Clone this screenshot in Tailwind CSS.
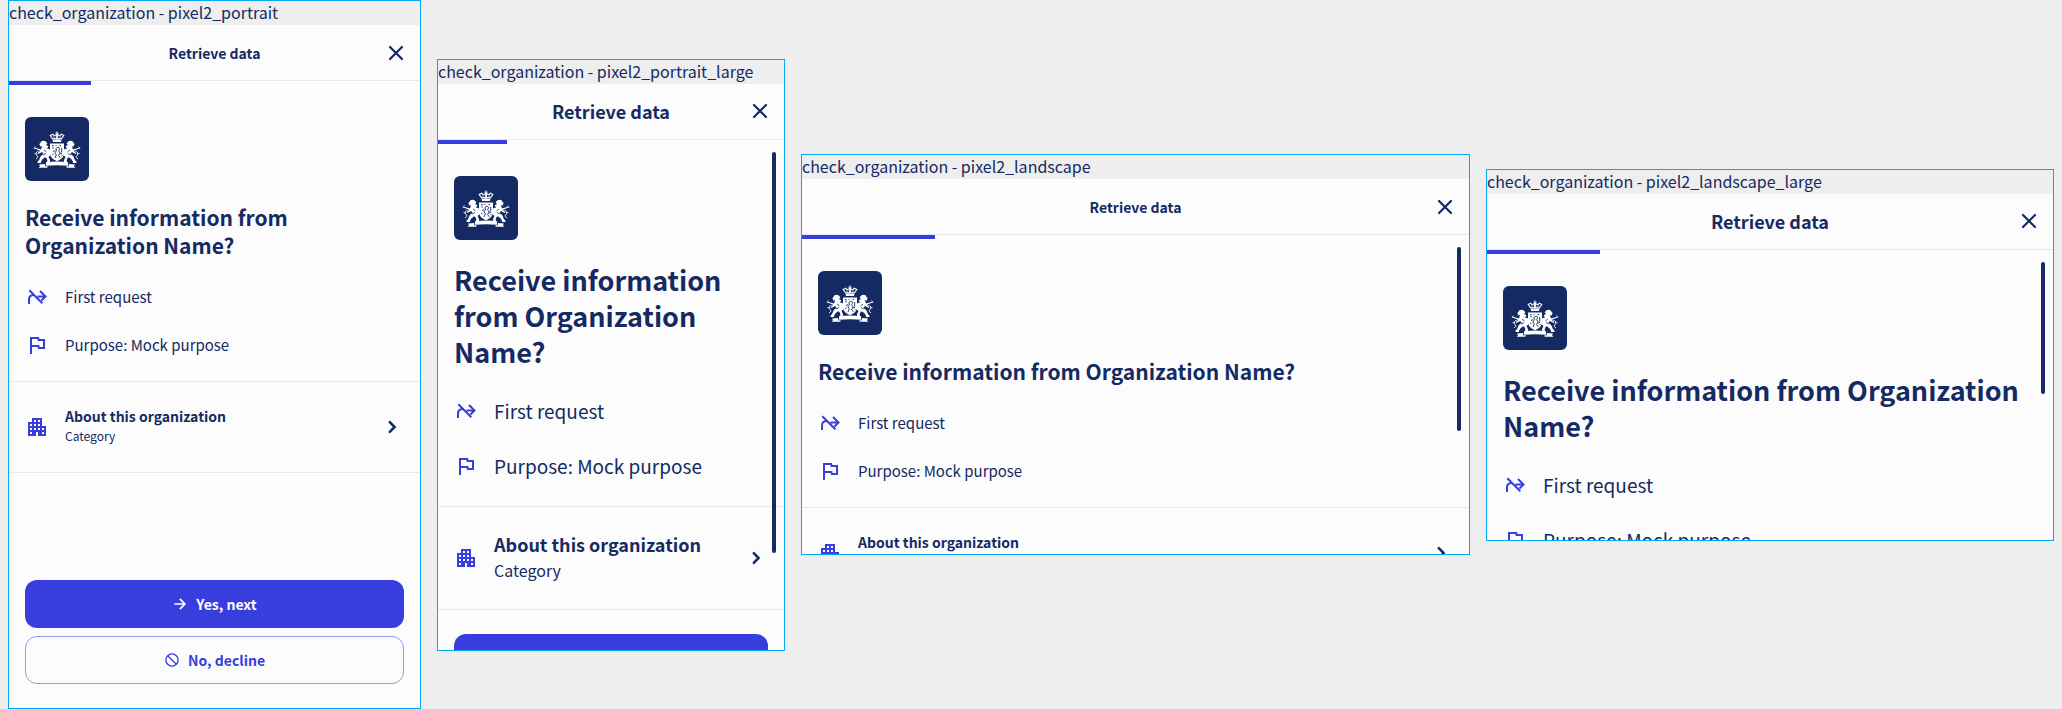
<!DOCTYPE html>
<html lang="en">
<head>
<meta charset="utf-8">
<title>check_organization</title>
<script src="https://cdn.jsdelivr.net/npm/@tailwindcss/browser@4"></script>
</head>
<body class="min-h-screen bg-[#eeeeee] font-['Noto_Sans_CJK_SC','Noto_Sans',sans-serif] text-[#152a62]">

<svg class="hidden" aria-hidden="true">
  <symbol id="close" viewBox="0 0 24 24"><path d="M6 6l12 12M18 6L6 18" fill="none" stroke="currentColor" stroke-width="2.2" stroke-linecap="round"/></symbol>
  <symbol id="first" viewBox="0 0 24 24"><path d="M4.300 5.300l13 13M4 19v-4.500c0-2.600 1.800-4.300 4.500-4.500M12.500 11.500H20M15 6l5.500 5.500-4 4" fill="none" stroke="currentColor" stroke-width="2"/></symbol>
  <symbol id="flag" viewBox="0 0 24 24"><path fill="currentColor" d="M12.360 6l.4 2H18v6h-3.360l-.4-2H7V6h5.360M14 4H5v17h2v-7h5.600l.4 2h7V6h-5.600L14 4z"/></symbol>
  <symbol id="building" viewBox="0 0 24 24"><path fill="currentColor" d="M17 11V3H7v4H3v14h8v-4h2v4h8V11h-4zM7 19H5v-2h2v2zm0-4H5v-2h2v2zm0-4H5V9h2v2zm4 4H9v-2h2v2zm0-4H9V9h2v2zm0-4H9V5h2v2zm4 8h-2v-2h2v2zm0-4h-2V9h2v2zm0-4h-2V5h2v2zm4 12h-2v-2h2v2zm0-4h-2v-2h2v2z"/></symbol>
  <symbol id="chevron" viewBox="0 0 24 24"><path d="M9.800 7.200l4.800 4.800-4.800 4.800" fill="none" stroke="currentColor" stroke-width="2.500" stroke-linecap="round"/></symbol>
  <symbol id="arrow" viewBox="0 0 24 24"><path d="M4.500 12h14M12.500 5.200l6.800 6.800-6.800 6.800" fill="none" stroke="currentColor" stroke-width="2.600" stroke-linecap="round"/></symbol>
  <symbol id="block" viewBox="0 0 24 24"><path d="M5.500 5.500l13 13" stroke="currentColor" stroke-width="2"/><circle cx="12" cy="12" r="9.200" fill="none" stroke="currentColor" stroke-width="2"/></symbol>
  <symbol id="arms" viewBox="0 0 64 64">
    <g fill="#fff">
      <!-- crown -->
      <path d="M31.500 14.500h1v1.200h1.200v.9h-1.200v1.400h-1v-1.400h-1.200v-.9h1.200zM27.500 22.800h9l-.6 2.200h-7.800z"/>
      <path d="M27.600 21.900l-2.400-3.400 2.600-1.300 1.400 1.700 2.800-1.700 2.800 1.700 1.400-1.700 2.600 1.300-2.400 3.400z" fill="none" stroke="#fff" stroke-width="1.100"/>
      <path d="M31.300 18h1.400v4h-1.400zM28.600 19.500l1 2.500M35.400 19.500l-1 2.500" stroke="#fff" stroke-width=".7"/>
      <!-- shield -->
      <path d="M25 26.500h14v9.500c0 4-3 6.600-7 8.200-4-1.600-7-4.200-7-8.200z"/>
      <!-- left supporter -->
      <g id="lion">
        <path d="M20.500 24.300c-2-1.200-4.700-.3-5 1.600l-1.500 1.300 1.300.9-.6 1.300 2.500-.1-1.300 3.300-3.300-1.200-3.600-1 .2 1.200 3 .9 2.900 1.400-2.500 2.400.6.700 4-2.100 1.300 2.200-2.700 2-1.700 3.800-1.800 2.200.5 1h3.300l-.2-1.200 1.600-2.700 2.700-2 1.600 1.300.6 2.500-.8 1.400.5.900h2.500l.5-2.800-1.600-3.700 1.700-1 .8-3.200-1.500-3.600-2.800-.6 1.700-1.700-1-1.400-1.300.3 1.200-2.300z"/>
        <path d="M13.500 34.500c-3 .2-2.800 3-1.200 4.300 1.300 1.300-.2 2.500-1.300 3.200" fill="none" stroke="#fff"/>
        <path d="M10.500 29.500l-1.500 2M12 37l-2.500-.5" stroke="#fff" stroke-width=".8"/>
      </g>
      <use href="#lion" transform="matrix(-1 0 0 1 64 0)"/>
      <!-- ribbon -->
      <path d="M21 45.200c7-.8 15-.8 22 0v3.600c-7-.8-15-.8-22 0zM14 47.500l6.200-.6v2.600l2.200-.5v1.800h-8.800l1.400-1.500zM50 47.500l-6.200-.6v2.600l-2.200-.5v1.800h8.800L49 49.300z"/>
    </g>
    <!-- lion and billets on the shield -->
    <g stroke="#152a62" fill="none" stroke-width=".9">
      <path d="M30 41l1.300-3-1.500-2.500 2-1.800-1-2 2.200-1.700 1.700 1.300-1 2.400 1.400 2.300-1.500 2.500 1.700 2.300M28 34.500l2.300-1M36.700 31v4.500M34.800 37l2.200-.6M28 29.500v2"/>
      <path d="M27 28.500h1.500M30.500 28.500h1M34.500 28.500H36M27 37.300h1.300M36.500 38.700h1"/>
    </g>
    <path d="M22 27.500l2 2M42 27.500l-2 2M19 33l2.500 2M45 33l-2.500 2M18 38l3-1.500M46 38l-3-1.500" stroke="#152a62" stroke-width=".8"/>
  </symbol>
</svg>

<main class="grid min-h-screen grid-cols-[413fr_348fr_669fr_568fr] items-center gap-4 px-2">

  <!-- Portrait -->
  <section class="flex aspect-[413/709] flex-col overflow-hidden border border-[#03a9f4] bg-[#fcfcfc]">
    <p class="h-6 shrink-0 bg-[#eeeeee] text-[16px] leading-[22px] whitespace-nowrap">check_organization - pixel2_portrait</p>
    <header class="grid h-14 shrink-0 grid-cols-[48px_1fr_48px] items-center border-b border-[#e6e7ef]">
      <h1 class="col-start-2 text-center text-[14px] leading-5 font-bold">Retrieve data</h1>
      <button type="button" aria-label="Close" class="grid h-12 place-items-center"><svg class="size-6"><use href="#close"/></svg></button>
    </header>
    <div class="flex grow flex-col">
      <div class="h-1 w-1/5 bg-[#383ede]"></div>
      <div class="flex flex-col px-4 pt-8 pb-3">
        <div class="size-16 overflow-hidden rounded-md bg-[#152a62]"><svg class="size-16" role="img" aria-label="Organization logo"><use href="#arms"/></svg></div>
        <h2 class="mt-[22px] mb-[14px] text-[21px] leading-7 font-bold">Receive information from Organization Name?</h2>
        <p class="flex items-center gap-4 py-3 text-[15px] leading-6"><svg class="size-6 shrink-0 text-[#383ede]"><use href="#first"/></svg>First request</p>
        <p class="flex items-center gap-4 py-3 text-[15px] leading-6"><svg class="size-6 shrink-0 text-[#383ede]"><use href="#flag"/></svg>Purpose: Mock purpose</p>
      </div>
      <button type="button" class="flex items-center gap-4 border-y border-[#e8e8ea] px-4 py-6 text-left">
        <svg class="size-6 shrink-0 text-[#383ede]"><use href="#building"/></svg>
        <span class="grow pb-[2px]"><span class="block text-[14px] leading-5 font-bold">About this organization</span><span class="block text-[12px] leading-5">Category</span></span>
        <svg class="size-6 shrink-0"><use href="#chevron"/></svg>
      </button>
      <div class="mt-auto flex flex-col gap-2 px-4 pt-6 pb-6">
        <button type="button" class="flex h-12 items-center justify-center gap-2 rounded-xl bg-[#383ede] text-[14px] leading-5 font-bold text-white"><svg class="size-4"><use href="#arrow"/></svg>Yes, next</button>
        <button type="button" class="flex h-12 items-center justify-center gap-2 rounded-xl border border-[#989bee] text-[14px] leading-5 font-bold text-[#383ede]"><svg class="size-4"><use href="#block"/></svg>No, decline</button>
      </div>
    </div>
  </section>

  <!-- Portrait, large text -->
  <section class="flex aspect-[348/592] flex-col overflow-hidden border border-[#03a9f4] bg-[#fcfcfc]">
    <p class="h-6 shrink-0 bg-[#eeeeee] text-[16px] leading-[22px] whitespace-nowrap">check_organization - pixel2_portrait_large</p>
    <header class="grid h-14 shrink-0 grid-cols-[48px_1fr_48px] items-center border-b border-[#e6e7ef]">
      <h1 class="col-start-2 text-center text-[18px] leading-6 font-bold">Retrieve data</h1>
      <button type="button" aria-label="Close" class="grid h-12 place-items-center"><svg class="size-6"><use href="#close"/></svg></button>
    </header>
    <div class="relative flex min-h-0 grow flex-col overflow-hidden">
      <div class="absolute top-3 right-2 h-[401px] w-1 rounded-full bg-[#152a62]"></div>
      <div class="h-1 w-1/5 shrink-0 bg-[#383ede]"></div>
      <div class="flex shrink-0 flex-col px-4 pt-8 pb-3">
        <div class="size-16 overflow-hidden rounded-md bg-[#152a62]"><svg class="size-16" role="img" aria-label="Organization logo"><use href="#arms"/></svg></div>
        <h2 class="mt-[22px] mb-[14px] text-[27px] leading-9 font-bold">Receive information from Organization Name?</h2>
        <p class="flex items-center gap-4 py-3 text-[19px] leading-[31px]"><svg class="size-6 shrink-0 text-[#383ede]"><use href="#first"/></svg><span class="pb-[2px] leading-[29px]">First request</span></p>
        <p class="flex items-center gap-4 py-3 text-[19px] leading-[31px]"><svg class="size-6 shrink-0 text-[#383ede]"><use href="#flag"/></svg><span class="pb-[2px] leading-[29px]">Purpose: Mock purpose</span></p>
      </div>
      <button type="button" class="flex shrink-0 items-center gap-4 border-y border-[#e8e8ea] px-4 py-6 text-left">
        <svg class="size-6 shrink-0 text-[#383ede]"><use href="#building"/></svg>
        <span class="grow pb-[2px]"><span class="block text-[18px] leading-[27px] font-bold">About this organization</span><span class="block text-[16px] leading-[25px]">Category</span></span>
        <svg class="size-6 shrink-0"><use href="#chevron"/></svg>
      </button>
      <div class="flex shrink-0 flex-col px-4 pt-6">
        <button type="button" aria-label="Yes, next" class="h-12 rounded-xl bg-[#383ede]"></button>
      </div>
    </div>
  </section>

  <!-- Landscape -->
  <section class="flex aspect-[669/401] flex-col overflow-hidden border border-[#03a9f4] bg-[#fcfcfc]">
    <p class="h-6 shrink-0 bg-[#eeeeee] text-[16px] leading-[22px] whitespace-nowrap">check_organization - pixel2_landscape</p>
    <header class="grid h-14 shrink-0 grid-cols-[48px_1fr_48px] items-center border-b border-[#e6e7ef]">
      <h1 class="col-start-2 text-center text-[14px] leading-5 font-bold">Retrieve data</h1>
      <button type="button" aria-label="Close" class="grid h-12 place-items-center"><svg class="size-6"><use href="#close"/></svg></button>
    </header>
    <div class="relative flex min-h-0 grow flex-col overflow-hidden">
      <div class="absolute top-3 right-2 h-[184px] w-1 rounded-full bg-[#152a62]"></div>
      <div class="h-1 w-1/5 shrink-0 bg-[#383ede]"></div>
      <div class="flex shrink-0 flex-col px-4 pt-8 pb-3">
        <div class="size-16 overflow-hidden rounded-md bg-[#152a62]"><svg class="size-16" role="img" aria-label="Organization logo"><use href="#arms"/></svg></div>
        <h2 class="mt-[22px] mb-[14px] text-[21px] leading-7 font-bold">Receive information from Organization Name?</h2>
        <p class="flex items-center gap-4 py-3 text-[15px] leading-6"><svg class="size-6 shrink-0 text-[#383ede]"><use href="#first"/></svg>First request</p>
        <p class="flex items-center gap-4 py-3 text-[15px] leading-6"><svg class="size-6 shrink-0 text-[#383ede]"><use href="#flag"/></svg>Purpose: Mock purpose</p>
      </div>
      <button type="button" class="flex shrink-0 items-center gap-4 border-y border-[#e8e8ea] px-4 py-6 text-left">
        <svg class="size-6 shrink-0 text-[#383ede]"><use href="#building"/></svg>
        <span class="h-[42px] grow"><span class="block text-[14px] leading-5 font-bold">About this organization</span></span>
        <svg class="size-6 shrink-0"><use href="#chevron"/></svg>
      </button>
    </div>
  </section>

  <!-- Landscape, large text -->
  <section class="flex aspect-[568/372] flex-col overflow-hidden border border-[#03a9f4] bg-[#fcfcfc]">
    <p class="h-6 shrink-0 bg-[#eeeeee] text-[16px] leading-[22px] whitespace-nowrap">check_organization - pixel2_landscape_large</p>
    <header class="grid h-14 shrink-0 grid-cols-[48px_1fr_48px] items-center border-b border-[#e6e7ef]">
      <h1 class="col-start-2 text-center text-[18px] leading-6 font-bold">Retrieve data</h1>
      <button type="button" aria-label="Close" class="grid h-12 place-items-center"><svg class="size-6"><use href="#close"/></svg></button>
    </header>
    <div class="relative flex min-h-0 grow flex-col overflow-hidden">
      <div class="absolute top-3 right-2 h-[132px] w-1 rounded-full bg-[#152a62]"></div>
      <div class="h-1 w-1/5 shrink-0 bg-[#383ede]"></div>
      <div class="flex shrink-0 flex-col px-4 pt-8 pb-3">
        <div class="size-16 overflow-hidden rounded-md bg-[#152a62]"><svg class="size-16" role="img" aria-label="Organization logo"><use href="#arms"/></svg></div>
        <h2 class="mt-[22px] mb-[14px] text-[27px] leading-9 font-bold">Receive information from Organization Name?</h2>
        <p class="flex items-center gap-4 py-3 text-[19px] leading-[31px]"><svg class="size-6 shrink-0 text-[#383ede]"><use href="#first"/></svg><span class="pb-[2px] leading-[29px]">First request</span></p>
        <p class="flex items-center gap-4 py-3 text-[19px] leading-[31px]"><svg class="size-6 shrink-0 text-[#383ede]"><use href="#flag"/></svg><span class="pb-[2px] leading-[29px]">Purpose: Mock purpose</span></p>
      </div>
    </div>
  </section>
</main>
</body>
</html>
